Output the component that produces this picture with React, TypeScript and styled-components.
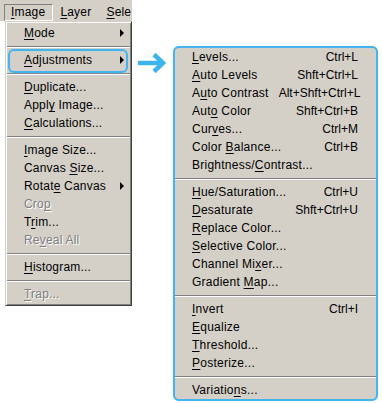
import React from 'react';
import styled, { createGlobalStyle } from 'styled-components';

const GlobalStyle = createGlobalStyle`
  html, body { margin: 0; padding: 0; background: #fff; }
  body {
    font-family: "Liberation Sans", Arial, sans-serif;
    font-size: 12px;
    color: #000;
  }
`;

const Page = styled.div`
  display: flex;
  align-items: flex-start;
  width: 382px;
  height: 403px;
  overflow: hidden;
`;

const LeftColumn = styled.div`
  width: 132px;
  display: flex;
  flex-direction: column;
`;

const MenuBar = styled.div`
  height: 21px;
  box-sizing: border-box;
  padding: 4px 0 0 4px;
  background: #d4d0c8;
  display: flex;
  align-items: flex-start;
  white-space: nowrap;
  overflow: hidden;
`;

const MenuBarItem = styled.div<{ $active?: boolean }>`
  height: 17px;
  box-sizing: border-box;
  line-height: 15px;
  padding: 0 7px 0 6px;
  border: 1px solid transparent;
  letter-spacing: 0.2px;
  ${p => p.$active && 'border-color: #808080 #fff #fff #808080;'}
`;

const Dropdown = styled.div`
  margin-left: 5px;
  width: 127px;
  box-sizing: border-box;
  background: #d4d0c8;
  border: 1px solid;
  border-color: #d4d0c8 #404040 #404040 #d4d0c8;
  box-shadow: inset 1px 1px #fff, inset -1px -1px #808080;
  padding: 2px 0 2px;
`;

const LeftItem = styled.div<{ $disabled?: boolean; $ring?: boolean }>`
  position: relative;
  height: 18px;
  display: flex;
  align-items: center;
  justify-content: space-between;
  padding: 0 7px 0 18px;
  white-space: nowrap;
  letter-spacing: 0.2px;
  color: ${p => (p.$disabled ? '#808080' : '#000')};
  text-shadow: ${p => (p.$disabled ? '1px 1px 0 #fff' : 'none')};
  ${p =>
    p.$ring &&
    `&::after {
      content: '';
      position: absolute;
      left: 2px; right: 3px; top: -2px; bottom: -4px;
      border: 2px solid #45b3ee;
      border-radius: 6px;
      box-shadow: 0 0 1px #9ad7f7, inset 0 0 1px #9ad7f7;
    }`}
`;

const SubArrow = styled.span`
  width: 0;
  height: 0;
  border-top: 4px solid transparent;
  border-bottom: 4px solid transparent;
  border-left: 4px solid #000;
`;

const Separator = styled.div<{ $inset?: boolean }>`
  height: 9px;
  display: flex;
  align-items: center;
  margin: 0 ${p => (p.$inset ? '1px' : '0')};
  &::before {
    content: '';
    flex: 1;
    height: 1px;
    background: #808080;
    border-bottom: 1px solid #fff;
  }
`;

const ArrowWrap = styled.div`
  margin: 52px 0 0 5px;
  width: 30px;
  height: 22px;
  display: flex;
`;

const Panel = styled.div`
  margin: 46px 0 0 6px;
  width: 205px;
  box-sizing: border-box;
  background: #d4d0c8;
  border: 2px solid #45b3ee;
  border-radius: 6px;
  box-shadow: 0 0 1px #9ad7f7;
  overflow: hidden;
`;

const PanelItem = styled.div`
  height: 18px;
  display: flex;
  align-items: center;
  justify-content: space-between;
  padding: 0 18px 0 17px;
  white-space: nowrap;
`;

const Label = styled.span`
  letter-spacing: 0.25px;
`;

const Shortcut = styled.span`
  margin-left: 10px;
`;

const Mn = styled.u`
  text-decoration: underline;
  text-underline-offset: 2px;
`;

function renderLabel(s: string) {
  const i = s.indexOf('&');
  if (i < 0) return s;
  return (
    <>
      {s.slice(0, i)}
      <Mn>{s[i + 1]}</Mn>
      {s.slice(i + 2)}
    </>
  );
}

type LeftEntry =
  | { sep: true }
  | { sep?: false; label: string; arrow?: boolean; disabled?: boolean; ring?: boolean };

const leftItems: LeftEntry[] = [
  { label: '&Mode', arrow: true },
  { sep: true },
  { label: '&Adjustments', arrow: true, ring: true },
  { sep: true },
  { label: '&Duplicate...' },
  { label: 'Appl&y Image...' },
  { label: '&Calculations...' },
  { sep: true },
  { label: '&Image Size...' },
  { label: 'Canvas &Size...' },
  { label: 'Rotat&e Canvas', arrow: true },
  { label: 'Cro&p', disabled: true },
  { label: 'T&rim...' },
  { label: 'Re&veal All', disabled: true },
  { sep: true },
  { label: '&Histogram...' },
  { sep: true },
  { label: '&Trap...', disabled: true },
];

type RightEntry = { sep: true } | { sep?: false; label: string; key?: string };

const rightItems: RightEntry[] = [
  { label: '&Levels...', key: 'Ctrl+L' },
  { label: '&Auto Levels', key: 'Shft+Ctrl+L' },
  { label: 'A&uto Contrast', key: 'Alt+Shft+Ctrl+L' },
  { label: 'Aut&o Color', key: 'Shft+Ctrl+B' },
  { label: 'Cur&ves...', key: 'Ctrl+M' },
  { label: 'Color &Balance...', key: 'Ctrl+B' },
  { label: 'Brightness/&Contrast...' },
  { sep: true },
  { label: '&Hue/Saturation...', key: 'Ctrl+U' },
  { label: '&Desaturate', key: 'Shft+Ctrl+U' },
  { label: '&Replace Color...' },
  { label: '&Selective Color...' },
  { label: 'Channel Mi&xer...' },
  { label: 'Gradient &Map...' },
  { sep: true },
  { label: '&Invert', key: 'Ctrl+I' },
  { label: '&Equalize' },
  { label: '&Threshold...' },
  { label: '&Posterize...' },
  { sep: true },
  { label: 'Variatio&ns...' },
];

export default function App() {
  return (
    <>
      <GlobalStyle />
      <Page>
        <LeftColumn>
          <MenuBar>
            <MenuBarItem $active>{renderLabel('&Image')}</MenuBarItem>
            <MenuBarItem>{renderLabel('&Layer')}</MenuBarItem>
            <MenuBarItem>{renderLabel('&Sele')}</MenuBarItem>
          </MenuBar>
          <Dropdown>
            {leftItems.map((it, i) =>
              it.sep ? (
                <Separator key={i} $inset />
              ) : (
                <LeftItem key={i} $disabled={it.disabled} $ring={it.ring}>
                  <span>{renderLabel(it.label)}</span>
                  {it.arrow && <SubArrow />}
                </LeftItem>
              )
            )}
          </Dropdown>
        </LeftColumn>
        <ArrowWrap>
          <svg width="30" height="22" viewBox="0 0 30 22">
            <path d="M1 11 H25" stroke="#3db4ef" strokeWidth="4.5" fill="none" />
            <path
              d="M17 2.5 L26 11 L17 19.5"
              stroke="#3db4ef"
              strokeWidth="4.5"
              fill="none"
              strokeLinejoin="miter"
            />
          </svg>
        </ArrowWrap>
        <Panel>
          {rightItems.map((it, i) =>
            it.sep ? (
              <Separator key={i} />
            ) : (
              <PanelItem key={i}>
                <Label>{renderLabel(it.label)}</Label>
                {it.key && <Shortcut>{it.key}</Shortcut>}
              </PanelItem>
            )
          )}
        </Panel>
      </Page>
    </>
  );
}
